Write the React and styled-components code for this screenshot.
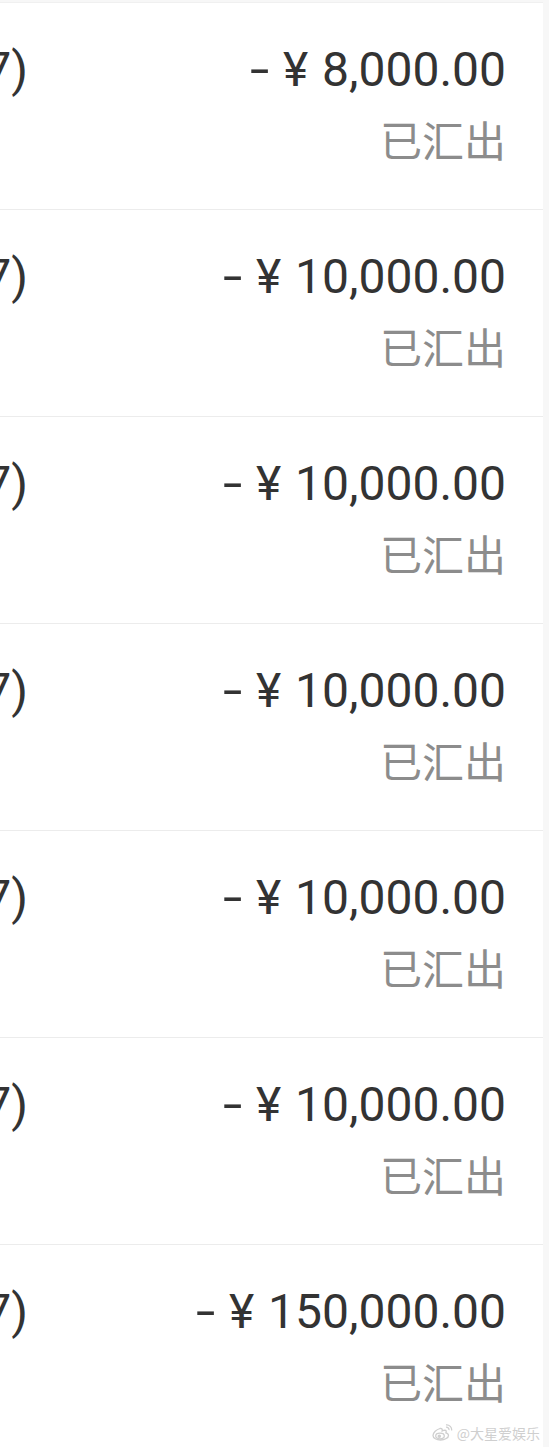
import React from 'react';
import styled, { createGlobalStyle } from 'styled-components';

const GlobalStyle = createGlobalStyle`
  body {
    margin: 0;
    background: #f7f7f7;
    font-family: Roboto, "Noto Sans CJK SC", sans-serif;
  }
`;

const Page = styled.div`
  position: relative;
  width: 549px;
  height: 1447px;
  overflow: hidden;
  background: #f7f7f7;
`;

const List = styled.div`
  width: 543px;
  margin-top: 2px;
  background: #fff;
  border-top: 1px solid #f0f0f0;
`;

const Row = styled.div`
  display: flex;
  align-items: flex-start;
  justify-content: space-between;
  box-sizing: border-box;
  height: 207px;
  padding: 39px 37px 0 0;
  border-bottom: 1px solid #ececec;
`;

const Account = styled.div`
  width: 28px;
  display: flex;
  justify-content: flex-end;
  overflow: hidden;
  white-space: nowrap;
  font: 400 48px/56px Roboto, sans-serif;
  color: #333;
`;

const Info = styled.div`
  display: flex;
  flex-direction: column;
  align-items: flex-end;
  gap: 20px;
`;

const Amount = styled.div`
  font: 400 48px/56px Roboto, sans-serif;
  color: #333;
  white-space: nowrap;
`;

const Sign = styled.span`
  display: inline-block;
  transform: scaleX(1.45);
  margin-right: 5px;
`;

const Yen = styled.span`
  margin-right: 2px;
`;

const Status = styled.div`
  font: 400 42px/42px "Noto Sans CJK SC", sans-serif;
  color: #8c8c8c;
`;

const Watermark = styled.div`
  position: absolute;
  right: 9px;
  bottom: 6px;
  display: flex;
  align-items: center;
  gap: 3px;
  font: 400 14px/16px "Noto Sans CJK SC", sans-serif;
  color: #cfcfcf;
  text-shadow: 0 0 2px #fff, 0 0 1px #fff;
`;

const WeiboLogo = () => (
  <svg width="23" height="17" viewBox="0 0 23 17" fill="none" stroke="#cfcfcf" strokeWidth="1.3">
    <path d="M9 4.5C5.5 5.5 2 8.5 2 11.5c0 2.8 3.6 4.5 7.5 4.5 4.6 0 8-2.3 8-4.6 0-1.6-1.5-2.3-2.6-2.6.6-1.4.4-2.5-1-2.6-1 0-2 .4-2.7.8.3-1.6-.2-2.9-2.2-2.5z" />
    <ellipse cx="9" cy="12" rx="4.3" ry="2.8" />
    <circle cx="8.3" cy="12.3" r="1.1" fill="#cfcfcf" />
    <path d="M15 3.2c1.8-.2 3.3 1.2 3 3" />
    <path d="M15 .9c3.4-.4 6.1 2.4 5.6 5.6" />
  </svg>
);

const rows = [
  '8,000.00',
  '10,000.00',
  '10,000.00',
  '10,000.00',
  '10,000.00',
  '10,000.00',
  '150,000.00',
];

export default function App() {
  return (
    <Page>
      <GlobalStyle />
      <List>
        {rows.map((amount, i) => (
          <Row key={i}>
            <Account>招商银行(8527)</Account>
            <Info>
              <Amount>
                <Sign>-</Sign> <Yen>¥</Yen> {amount}
              </Amount>
              <Status>已汇出</Status>
            </Info>
          </Row>
        ))}
      </List>
      <Watermark>
        <WeiboLogo />
        <span>@大星爱娱乐</span>
      </Watermark>
    </Page>
  );
}
